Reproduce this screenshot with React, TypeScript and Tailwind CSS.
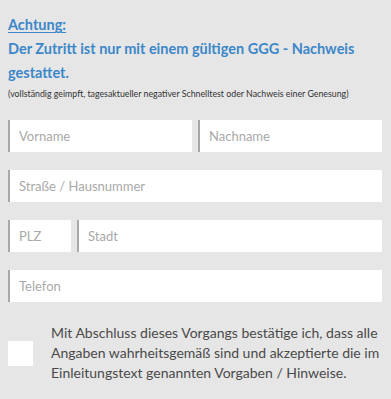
export default function App() {
  const font = { fontFamily: '"Lato", "Liberation Sans", sans-serif' }
  return (
    <div className="min-h-screen w-[391px] h-[399px] overflow-hidden bg-[#e6e6e6] pl-[8px] pr-[9px]" style={font}>
      {/* Hinweis */}
      <div className="pt-[12px]">
        <p className="text-[14.5px] font-bold leading-[25px] text-[#3c87c9] underline underline-offset-2">Achtung:</p>
        <p className="text-[14.5px] font-bold leading-[24px] text-[#3c87c9]">
          Der Zutritt ist nur mit einem gültigen GGG - Nachweis gestattet.
        </p>
        <p className="mt-[3px] text-[8.8px] leading-[12px] text-[#333]">
          (vollständig geimpft, tagesaktueller negativer Schnelltest oder Nachweis einer Genesung)
        </p>
      </div>

      {/* Formular */}
      <div className="mt-[20px] flex flex-col gap-[18px]">
        <div className="flex gap-[6px]">
          <Field placeholder="Vorname" className="flex-1" />
          <Field placeholder="Nachname" className="flex-1" />
        </div>
        <Field placeholder="Straße / Hausnummer" />
        <div className="flex gap-[6px]">
          <Field placeholder="PLZ" className="w-[63px]" />
          <Field placeholder="Stadt" className="flex-1" />
        </div>
        <Field placeholder="Telefon" />
      </div>

      {/* Bestätigung */}
      <div className="mt-[21px] flex items-center gap-[18px]">
        <div className="w-[25px] h-[25px] bg-white shrink-0" />
        <p className="text-[14px] leading-[20px] text-[#4a4a4a]">
          Mit Abschluss dieses Vorgangs bestätige ich, dass alle Angaben wahrheitsgemäß sind und akzeptierte die im
          Einleitungstext genannten Vorgaben / Hinweise.
        </p>
      </div>
    </div>
  )
}

function Field({ placeholder, className = '' }: { placeholder: string; className?: string }) {
  return (
    <input
      placeholder={placeholder}
      className={`${className} h-[32px] min-w-0 bg-white border-l-2 border-[#a8a8a8] pl-[9px] text-[13px] text-[#333] placeholder:text-[#a9a9a9] outline-none`}
    />
  )
}
